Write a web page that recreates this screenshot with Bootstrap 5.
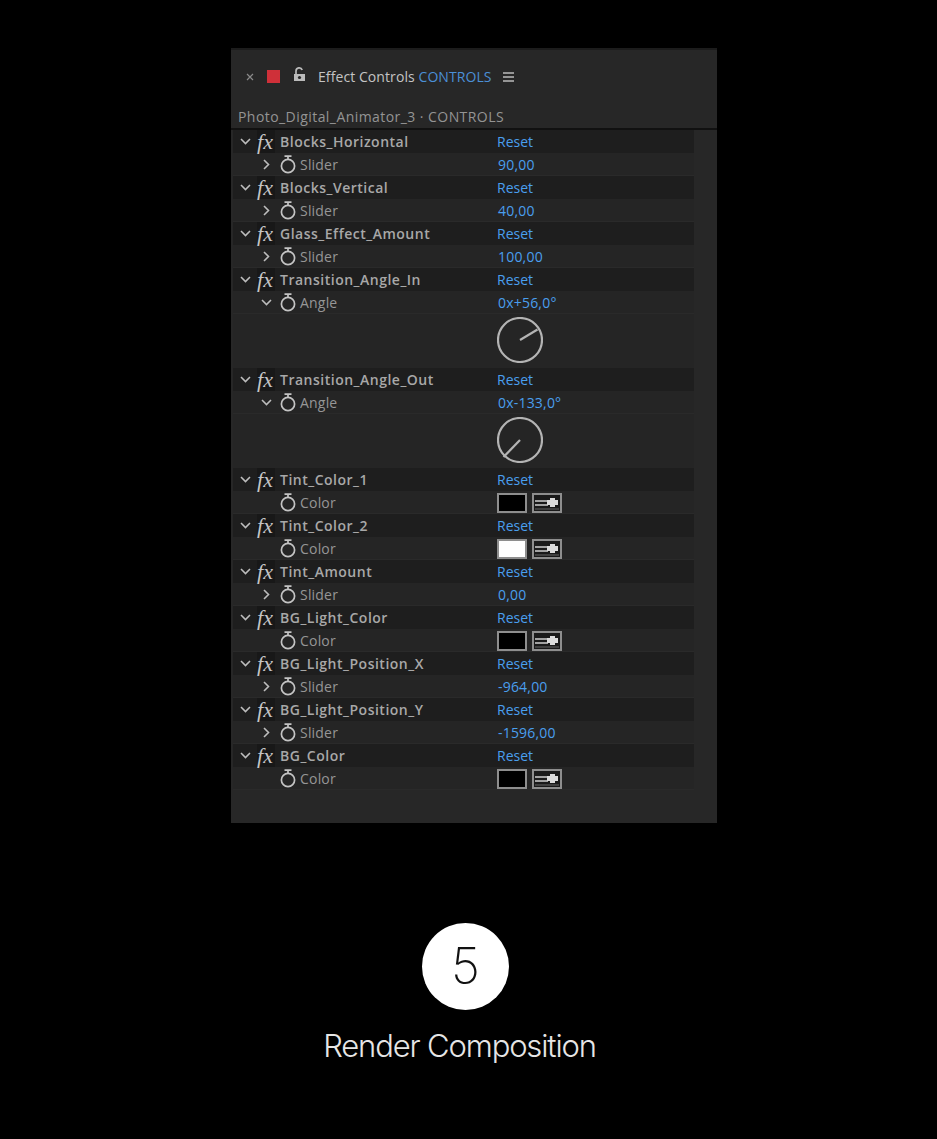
<!DOCTYPE html>
<html lang="en">
<head>
    <meta charset="UTF-8">
    <meta name="viewport" content="width=device-width, initial-scale=1.0">
    <title>Render Composition</title>
    <link href="https://cdn.jsdelivr.net/npm/bootstrap@5.3.0/dist/css/bootstrap.min.css" rel="stylesheet">
    <style>
        body {
            background-color: #000;
            font-family: "Open Sans", "Noto Sans", sans-serif;
            overflow: hidden;
        }
        .fx-panel {
            width: 486px;
            height: 775px;
            margin: 48px 0 0 231px;
            background-color: #272727;
            border-top: 2px solid #1c1c1c;
        }
        .fx-tabbar {
            height: 53px;
            padding-left: 15px;
            color: #c4c4c4;
            font-size: 14px;
            font-weight: 500;
            letter-spacing: .08px;
        }
        .fx-close { width: 8px; height: 8px; margin-right: 13px; }
        .fx-red { width: 13px; height: 13px; background-color: #cf3039; margin-right: 13px; }
        .fx-lock { width: 13px; height: 15px; margin-right: 12px; margin-top: -5px; }
        .fx-blue { color: #4b8fd6; }
        .fx-burger { width: 11px; height: 10px; margin-left: 11px; }
        .fx-path {
            height: 27px;
            padding-left: 7px;
            color: #949494;
            font-size: 14px;
            letter-spacing: .44px;
            line-height: 28px;
            border-bottom: 2px solid #111;
        }
        .fx-rows { width: 461px; margin-left: 2px; }
        .fx-row { height: 23px; font-size: 14px; line-height: 23px; color: #969696; }
        .fx-effect { background-color: #1e1e1e; color: #a8a8a8; font-weight: 600; }
        .fx-sub { background-color: #252525; border-bottom: 1px solid #2a2a2a; }
        .fx-slot { flex: none; display: flex; align-items: center; justify-content: center; height: 100%; }
        .fx-chev { width: 24px; }
        .fx-mark {
            width: 18px;
            padding-right: 2px;
            background-color: #181818;
            color: #c4c4c4;
            font-family: "Liberation Serif", serif;
            font-style: italic;
            font-size: 22px;
            font-weight: 400;
        }
        .fx-name { width: 222px; padding-left: 5px; flex: none; letter-spacing: .5px; }
        .fx-twist { width: 46px; padding-left: 20px; }
        .fx-watch { width: 18px; }
        .fx-label { width: 198px; margin-left: 3px; flex: none; letter-spacing: .2px; }
        .fx-value { color: #4a9fee; font-weight: 400; letter-spacing: .2px; }
        .fx-reset { color: #4a9fee; font-weight: 400; }
        .fx-dial { height: 54px; padding: 0 0 3px 264px; background-color: #252525; }
        .fx-color { margin-top: 1px; }
        .fx-swatch { width: 30px; height: 20px; margin-left: -1px; border: 2px solid #8e8e8e; }
        .fx-drop { width: 30px; height: 20px; margin-left: 5px; }
        .step-badge {
            width: 87px;
            height: 87px;
            margin: 100px 0 0 -6px;
            background-color: #fff;
            color: #111;
            font-family: Inter, "Liberation Sans", sans-serif;
            font-size: 50px;
            font-weight: 200;
        }
        .step-title {
            margin: 16px 0 0 -18px;
            color: #e6e6e6;
            font-family: Inter, "Liberation Sans", sans-serif;
            font-size: 31px;
            font-weight: 300;
            letter-spacing: -1.15px;
            line-height: 40px;
        }
    </style>
</head>
<body>
    <div class="fx-panel">
        <div class="fx-tabbar d-flex align-items-center">
            <svg class="fx-close" viewBox="0 0 8 8"><path d="M1 1l6 6M7 1l-6 6" stroke="#8a8a8a" stroke-width="1.2"/></svg>
            <span class="fx-red"></span>
            <svg class="fx-lock" viewBox="0 0 13 15"><path d="M3 7V4a3.2 3.2 0 0 1 6.2-1" fill="none" stroke="#bbb" stroke-width="1.7"/><path d="M1 7h11v7H1z" fill="#bbb"/><circle cx="6.5" cy="10.5" r="1.6" fill="#272727"/></svg>
            <span>Effect Controls <span class="fx-blue">CONTROLS</span></span>
            <svg class="fx-burger" viewBox="0 0 11 10"><path d="M0 1h11M0 5h11M0 9h11" stroke="#bbb" stroke-width="1.5"/></svg>
        </div>
        <div class="fx-path">Photo_Digital_Animator_3 · CONTROLS</div>
        <div class="fx-rows" id="rows"></div>
    </div>

    <div class="d-flex flex-column align-items-center">
        <div class="step-badge rounded-circle d-flex align-items-center justify-content-center">5</div>
        <div class="step-title">Render Composition</div>
    </div>

    <script src="https://cdn.jsdelivr.net/npm/bootstrap@5.3.0/dist/js/bootstrap.bundle.min.js"></script>
    <script>
        // name, kind, value, dial hand
        const effects = [
            ['Blocks_Horizontal', 'Slider', '90,00'],
            ['Blocks_Vertical', 'Slider', '40,00'],
            ['Glass_Effect_Amount', 'Slider', '100,00'],
            ['Transition_Angle_In', 'Angle', '0x+56,0°', 'M23 23L40.5 12.5'],
            ['Transition_Angle_Out', 'Angle', '0x-133,0°', 'M23 23L6.5 40'],
            ['Tint_Color_1', 'Color', '#000'],
            ['Tint_Color_2', 'Color', '#fff'],
            ['Tint_Amount', 'Slider', '0,00'],
            ['BG_Light_Color', 'Color', '#000'],
            ['BG_Light_Position_X', 'Slider', '-964,00'],
            ['BG_Light_Position_Y', 'Slider', '-1596,00'],
            ['BG_Color', 'Color', '#000']
        ];

        const chevDown = '<svg width="11" height="7" viewBox="0 0 11 7"><path d="M1 1l4.5 4.5L10 1" fill="none" stroke="#bdbdbd" stroke-width="1.6"/></svg>';
        const chevRight = '<svg width="7" height="11" viewBox="0 0 7 11"><path d="M1 1l4.5 4.5L1 10" fill="none" stroke="#bdbdbd" stroke-width="1.6"/></svg>';
        const watch = '<svg width="16" height="19" viewBox="0 0 16 19"><circle cx="8" cy="11" r="6.6" fill="none" stroke="#c4c4c4" stroke-width="1.7"/><path d="M4.5 1.2h7M8 1.2v3" stroke="#c4c4c4" stroke-width="1.7" fill="none"/></svg>';
        const dropper = '<svg class="fx-drop" viewBox="0 0 30 20"><rect x="1" y="1" width="28" height="18" fill="#1a1a1a" stroke="#8e8e8e" stroke-width="2"/><path d="M3 8h13M3 12h13" stroke="#d0d0d0" stroke-width="1.3"/><path d="M15 7h3V5h5v2h3v5h-3v2h-5v-2h-3z" fill="#dcdcdc"/><path d="M3 16h24" stroke="#666"/></svg>';

        let html = '';
        effects.forEach(([name, kind, value, hand]) => {
            html += `<div class="fx-row fx-effect d-flex">
                <span class="fx-slot fx-chev">${chevDown}</span>
                <span class="fx-slot fx-mark">fx</span>
                <span class="fx-name">${name}</span>
                <span class="fx-reset">Reset</span>
            </div>`;

            let chev = chevRight;
            if (kind === 'Angle') chev = chevDown;
            if (kind === 'Color') chev = '';
            let right = `<span class="fx-value">${value}</span>`;
            if (kind === 'Color') {
                right = `<span class="fx-color d-flex align-items-center"><span class="fx-swatch" style="background-color:${value}"></span>${dropper}</span>`;
            }
            html += `<div class="fx-row fx-sub d-flex">
                <span class="fx-slot fx-twist">${chev}</span>
                <span class="fx-slot fx-watch">${watch}</span>
                <span class="fx-label">${kind}</span>
                ${right}
            </div>`;

            if (hand) {
                html += `<div class="fx-dial d-flex align-items-center">
                    <svg width="46" height="46" viewBox="0 0 46 46"><circle cx="23" cy="23" r="22" fill="none" stroke="#b4b4b4" stroke-width="2.2"/><path d="${hand}" stroke="#b4b4b4" stroke-width="2.2"/></svg>
                </div>`;
            }
        });
        document.getElementById('rows').innerHTML = html;
    </script>
</body>
</html>
